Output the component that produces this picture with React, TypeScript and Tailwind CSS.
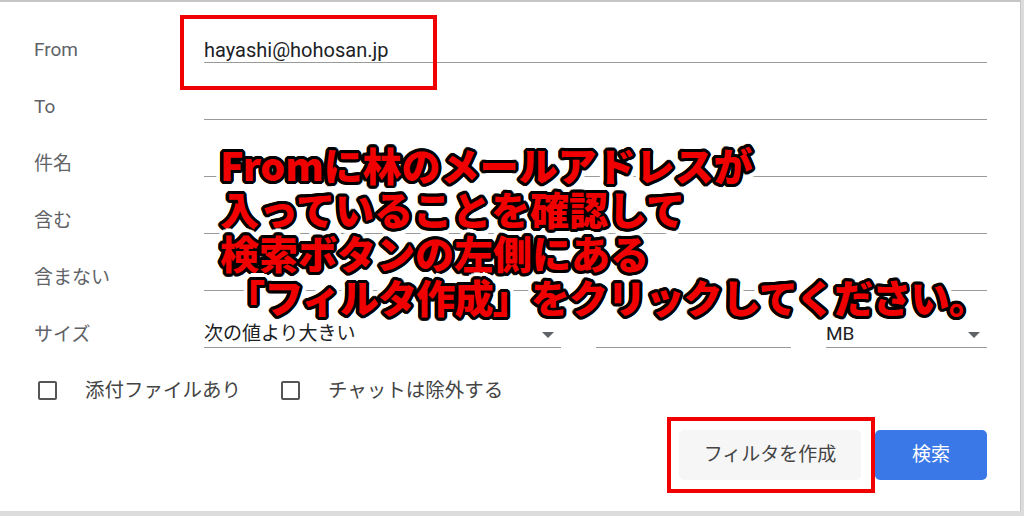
import { ReactNode } from 'react';

const font = "font-['Roboto','Noto_Sans_CJK_JP',sans-serif]";

const Row = ({ label, children }: { label: string; children: ReactNode }) => (
  <div className="flex items-end h-[57px]">
    <div className="w-[170px] h-[26px] flex items-center text-[19px] text-[#5f6368]">{label}</div>
    <div className="flex-1 flex items-end gap-[35px]">{children}</div>
  </div>
);

const Field = ({ value, className = 'flex-1' }: { value?: string; className?: string }) => (
  <div className={`${className} h-[26px] flex items-center border-b border-[#9a9a9a] text-[20px] text-[#202124]`}>
    {value}
  </div>
);

const Select = ({ value, className }: { value: string; className: string }) => (
  <div className={`${className} h-[26px] flex items-center justify-between border-b border-[#9a9a9a] text-[19px] text-[#202124]`}>
    <span>{value}</span>
    <svg width="12" height="6" viewBox="0 0 12 6" className="mr-[7px]">
      <path d="M0 0h12L6 6z" fill="#5f6368" />
    </svg>
  </div>
);

const Check = ({ label }: { label: string }) => (
  <div className="flex items-center">
    <div className="w-[19px] h-[19px] border-2 border-[#555] rounded-[2px] ml-[4px]" />
    <span className="ml-[28px] text-[19.5px] text-[#444]">{label}</span>
  </div>
);

const lines = [
  { text: 'Fromに林のメールアドレスが', pad: 'pl-0' },
  { text: '入っていることを確認して', pad: 'pl-0' },
  { text: '検索ボタンの左側にある', pad: 'pl-0' },
  { text: '「フィルタ作成」をクリックしてください。', pad: 'pl-[6px] tracking-[-0.8px]' },
];

const halo =
  '[text-shadow:7px_0_0_#fff,6.5px_2.7px_0_#fff,5px_5px_0_#fff,2.7px_6.5px_0_#fff,0_7px_0_#fff,-2.7px_6.5px_0_#fff,-5px_5px_0_#fff,-6.5px_2.7px_0_#fff,-7px_0_0_#fff,-6.5px_-2.7px_0_#fff,-5px_-5px_0_#fff,-2.7px_-6.5px_0_#fff,0_-7px_0_#fff,2.7px_-6.5px_0_#fff,5px_-5px_0_#fff,6.5px_-2.7px_0_#fff,4px_0_0_#fff,0_4px_0_#fff,-4px_0_0_#fff,0_-4px_0_#fff]';
const outline =
  '[text-shadow:3.2px_0_0_#000,3px_1.2px_0_#000,2.3px_2.3px_0_#000,1.2px_3px_0_#000,0_3.2px_0_#000,-1.2px_3px_0_#000,-2.3px_2.3px_0_#000,-3px_1.2px_0_#000,-3.2px_0_0_#000,-3px_-1.2px_0_#000,-2.3px_-2.3px_0_#000,-1.2px_-3px_0_#000,0_-3.2px_0_#000,1.2px_-3px_0_#000,2.3px_-2.3px_0_#000,3px_-1.2px_0_#000,1.6px_0_0_#000,0_1.6px_0_#000,-1.6px_0_0_#000,0_-1.6px_0_#000]';

// two stacked copies: white halo underneath, red fill with black outline on top
const Callout = () => (
  <div className="absolute left-[220px] top-[140px] font-['Noto_Sans_CJK_JP',sans-serif] font-black text-[39px] leading-[44px]">
    {lines.map((l) => (
      <div key={l.text} className={`grid whitespace-nowrap ${l.pad}`}>
        <span className={`col-start-1 row-start-1 text-white ${halo}`}>{l.text}</span>
        <span className={`col-start-1 row-start-1 text-[#f00000] ${outline}`}>{l.text}</span>
      </div>
    ))}
  </div>
);

export default function App() {
  return (
    <div className={`w-[1024px] h-[516px] bg-[#dcdcdc] relative overflow-hidden ${font}`}>
      <div className="w-[1021px] h-[511px] bg-white border-t-2 border-r border-[#c6c6c6] relative">
        <div className="pl-[34px] pr-[33px] pt-[4px]">
          <Row label="From"><Field value="hayashi@hohosan.jp" /></Row>
          <Row label="To"><Field /></Row>
          <Row label="件名"><Field /></Row>
          <Row label="含む"><Field /></Row>
          <Row label="含まない"><Field /></Row>
          <Row label="サイズ">
            <Select value="次の値より大きい" className="w-[357px]" />
            <Field className="w-[195px]" />
            <Select value="MB" className="flex-1" />
          </Row>
          <div className="flex items-center gap-[36px] mt-[28px]">
            <Check label="添付ファイルあり" />
            <Check label="チャットは除外する" />
          </div>
          <div className="flex justify-end gap-[14px] mt-[25px]">
            <button className="w-[182px] h-[50px] rounded-[5px] bg-[#f6f6f6] text-[19px] text-[#444]">フィルタを作成</button>
            <button className="w-[112px] h-[50px] rounded-[5px] bg-[#3b78e7] text-[19px] text-white">検索</button>
          </div>
        </div>

        <div className="absolute left-[180px] top-[13px] w-[257px] h-[75px] border-4 border-[#f00000]" />
        <div className="absolute left-[667px] top-[415px] w-[208px] h-[76px] border-4 border-[#f00000]" />
        <Callout />
      </div>
    </div>
  );
}
